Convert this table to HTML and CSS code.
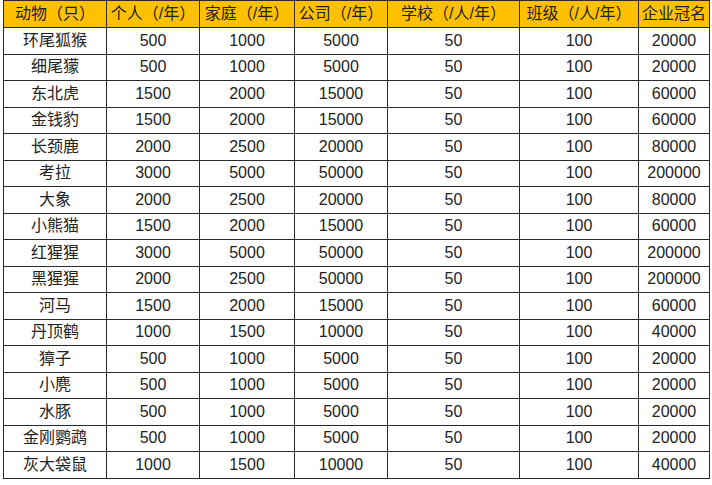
FILE: index.html
```html
<!DOCTYPE html>
<html lang="zh-CN">
<head>
<meta charset="utf-8">
<title>动物认养价格表</title>
<link rel="stylesheet" href="styles.css">
</head>
<body>
<div class="sheet">
<table class="price-table">
  <colgroup>
    <col class="c-animal">
    <col class="c-person">
    <col class="c-family">
    <col class="c-company">
    <col class="c-school">
    <col class="c-class">
    <col class="c-naming">
  </colgroup>
  <thead>
    <tr>
      <th>动物（只）</th>
      <th>个人（/年）</th>
      <th>家庭（/年）</th>
      <th>公司（/年）</th>
      <th>学校（/人/年）</th>
      <th>班级（/人/年）</th>
      <th>企业冠名</th>
    </tr>
  </thead>
  <tbody>
    <tr><td>环尾狐猴</td><td>500</td><td>1000</td><td>5000</td><td>50</td><td>100</td><td>20000</td></tr>
    <tr><td>细尾獴</td><td>500</td><td>1000</td><td>5000</td><td>50</td><td>100</td><td>20000</td></tr>
    <tr><td>东北虎</td><td>1500</td><td>2000</td><td>15000</td><td>50</td><td>100</td><td>60000</td></tr>
    <tr><td>金钱豹</td><td>1500</td><td>2000</td><td>15000</td><td>50</td><td>100</td><td>60000</td></tr>
    <tr><td>长颈鹿</td><td>2000</td><td>2500</td><td>20000</td><td>50</td><td>100</td><td>80000</td></tr>
    <tr><td>考拉</td><td>3000</td><td>5000</td><td>50000</td><td>50</td><td>100</td><td>200000</td></tr>
    <tr><td>大象</td><td>2000</td><td>2500</td><td>20000</td><td>50</td><td>100</td><td>80000</td></tr>
    <tr><td>小熊猫</td><td>1500</td><td>2000</td><td>15000</td><td>50</td><td>100</td><td>60000</td></tr>
    <tr><td>红猩猩</td><td>3000</td><td>5000</td><td>50000</td><td>50</td><td>100</td><td>200000</td></tr>
    <tr><td>黑猩猩</td><td>2000</td><td>2500</td><td>50000</td><td>50</td><td>100</td><td>200000</td></tr>
    <tr><td>河马</td><td>1500</td><td>2000</td><td>15000</td><td>50</td><td>100</td><td>60000</td></tr>
    <tr><td>丹顶鹤</td><td>1000</td><td>1500</td><td>10000</td><td>50</td><td>100</td><td>40000</td></tr>
    <tr><td>獐子</td><td>500</td><td>1000</td><td>5000</td><td>50</td><td>100</td><td>20000</td></tr>
    <tr><td>小麂</td><td>500</td><td>1000</td><td>5000</td><td>50</td><td>100</td><td>20000</td></tr>
    <tr><td>水豚</td><td>500</td><td>1000</td><td>5000</td><td>50</td><td>100</td><td>20000</td></tr>
    <tr><td>金刚鹦鹉</td><td>500</td><td>1000</td><td>5000</td><td>50</td><td>100</td><td>20000</td></tr>
    <tr><td>灰大袋鼠</td><td>1000</td><td>1500</td><td>10000</td><td>50</td><td>100</td><td>40000</td></tr>
  </tbody>
</table>
</div>
</body>
</html>
```

FILE: styles.css
```css
html, body {
  margin: 0;
  padding: 0;
  background: #ffffff;
}

.sheet {
  padding: 0 0 0 3px;
}

.price-table {
  border-collapse: collapse;
  table-layout: fixed;
  width: 706px;
  font-family: "Liberation Sans", "Noto Sans CJK SC", sans-serif;
  font-size: 16px;
  color: #222222;
}

.c-animal { width: 103px; }
.c-person { width: 93px; }
.c-family { width: 95px; }
.c-company { width: 93px; }
.c-school { width: 132px; }
.c-class { width: 119px; }
.c-naming { width: 71px; }

.price-table th,
.price-table td {
  border: 1px solid #2a2a2a;
  padding: 0;
  text-align: center;
  white-space: nowrap;
  overflow: hidden;
  line-height: 20px;
}

.price-table th {
  background: #ffc000;
  font-weight: normal;
  height: 26px;
}

.price-table td {
  height: 25.5px;
}
```
